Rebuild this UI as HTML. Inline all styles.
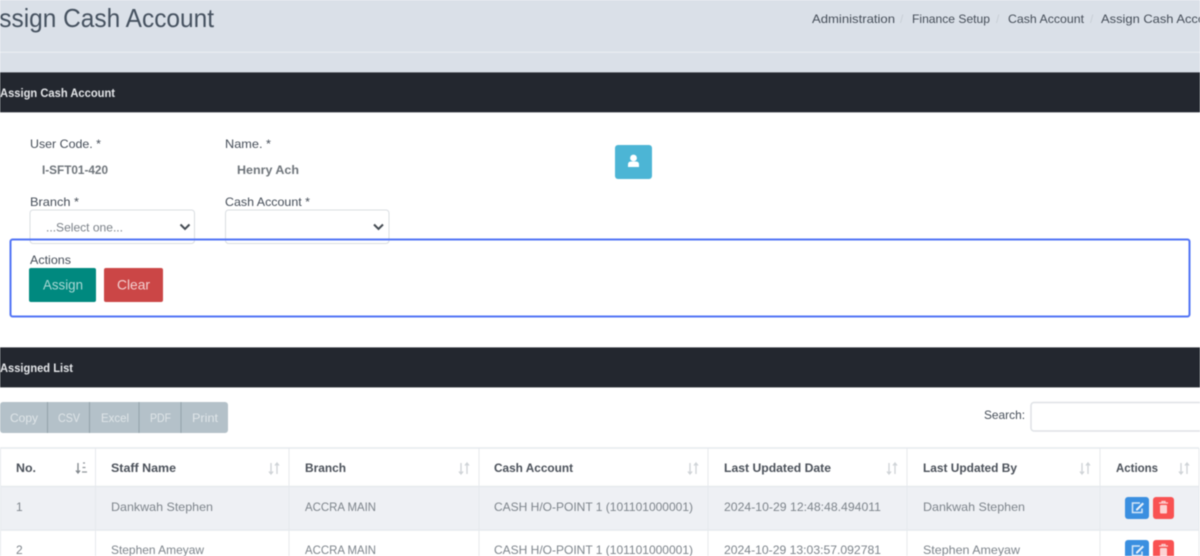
<!DOCTYPE html>
<html lang="en">
<head>
<meta charset="utf-8">
<title>Assign Cash Account</title>
<style>
html,body{margin:0;padding:0;width:1200px;height:556px;overflow:hidden;background:#fff}
svg{display:block;filter:blur(.55px)}
text{font-family:"Liberation Sans",sans-serif;font-size:12px;fill:#6e757c}
.l{fill:#454d58}
.h{font-weight:bold;fill:#4a5059}
.w{font-weight:bold;fill:#e4e6e9}
.c{fill:#7d848b}
.b{fill:#dfe5e8}
</style>
</head>
<body>
<svg width="1200" height="556" viewBox="0 0 1200 556" xmlns="http://www.w3.org/2000/svg">
<rect width="1200" height="113" fill="#dae0e8"/>
<rect y="51.5" width="1200" height="1.5" fill="#e7ebf0"/>
<rect y="72.400" width="1200" height="40" fill="#23272f"/>
<rect y="347.400" width="1200" height="40" fill="#23272f"/>
<rect y="112.400" width="1200" height="1" fill="#fff"/>

<text x="-17" y="27" style="font-size:26px;fill:#465260" textLength="231" lengthAdjust="spacingAndGlyphs">Assign Cash Account</text>

<text x="812" y="23" class="l" textLength="83" lengthAdjust="spacingAndGlyphs">Administration</text>
<text x="900" y="23" style="fill:#c8ced5">/</text>
<text x="912" y="23" class="l" textLength="78" lengthAdjust="spacingAndGlyphs">Finance Setup</text>
<text x="996" y="23" style="fill:#c8ced5">/</text>
<text x="1008" y="23" class="l" textLength="76" lengthAdjust="spacingAndGlyphs">Cash Account</text>
<text x="1090" y="23" style="fill:#c8ced5">/</text>
<text x="1101" y="23" class="l" textLength="122" lengthAdjust="spacingAndGlyphs">Assign Cash Account</text>

<text x="0" y="97" class="w" textLength="115" lengthAdjust="spacingAndGlyphs">Assign Cash Account</text>
<text x="0" y="372" class="w" textLength="73" lengthAdjust="spacingAndGlyphs">Assigned List</text>

<text x="30" y="148" class="l" textLength="71" lengthAdjust="spacingAndGlyphs">User Code. *</text>
<text x="225" y="148" class="l" textLength="46" lengthAdjust="spacingAndGlyphs">Name. *</text>
<text x="42" y="174" class="h" style="fill:#6e747a" textLength="66" lengthAdjust="spacingAndGlyphs">I-SFT01-420</text>
<text x="237" y="174" class="h" style="fill:#6e747a" textLength="62" lengthAdjust="spacingAndGlyphs">Henry Ach</text>
<text x="30" y="206" class="l" textLength="49" lengthAdjust="spacingAndGlyphs">Branch *</text>
<text x="225" y="206" class="l" textLength="85" lengthAdjust="spacingAndGlyphs">Cash Account *</text>

<rect x="30" y="210" width="164.500" height="33.500" rx="3" fill="#fff" stroke="#d9dde1"/>
<rect x="225.500" y="210" width="163.500" height="33.500" rx="3" fill="#fff" stroke="#d9dde1"/>
<text x="46" y="231.500" style="fill:#7b8188" textLength="77" lengthAdjust="spacingAndGlyphs">...Select one...</text>
<path d="M180.500 224.500l4.500 4.500 4.500-4.500M374 224.500l4.500 4.500 4.500-4.500" fill="none" stroke="#444b52" stroke-width="2"/>

<rect x="615" y="145" width="37" height="34" rx="3" fill="#4cb5d5"/>
<circle cx="633.500" cy="158" r="3.400" fill="#fff"/>
<path d="M628 167v-2.500q0-3 3-3h5q3 0 3 3v2.500z" fill="#fff"/>

<rect x="10.500" y="239.500" width="1179" height="77" rx="2" fill="none" stroke="#5274f5" stroke-width="2"/>
<text x="30" y="264" class="l" textLength="41" lengthAdjust="spacingAndGlyphs">Actions</text>
<rect x="29" y="268" width="67" height="34" rx="2" fill="#00897f"/>
<text x="43" y="289.500" style="font-size:14px;fill:#a9d8d4" textLength="40" lengthAdjust="spacingAndGlyphs">Assign</text>
<rect x="104" y="268" width="59" height="34" rx="2" fill="#cb4646"/>
<text x="117" y="289.500" style="font-size:14px;fill:#f3d0d0" textLength="33" lengthAdjust="spacingAndGlyphs">Clear</text>

<rect x="0" y="402" width="228" height="31" rx="3" fill="#b4c1c9"/>
<path d="M47.500 402v31M89.500 402v31M139 402v31M181 402v31" stroke="#93a2ab" stroke-width="1"/>
<text x="10" y="422" class="b" textLength="28" lengthAdjust="spacingAndGlyphs">Copy</text>
<text x="58" y="422" class="b" textLength="22" lengthAdjust="spacingAndGlyphs">CSV</text>
<text x="101" y="422" class="b" textLength="28" lengthAdjust="spacingAndGlyphs">Excel</text>
<text x="150" y="422" class="b" textLength="21" lengthAdjust="spacingAndGlyphs">PDF</text>
<text x="192" y="422" class="b" textLength="26" lengthAdjust="spacingAndGlyphs">Print</text>

<text x="984" y="419" class="l" textLength="41" lengthAdjust="spacingAndGlyphs">Search:</text>
<rect x="1031" y="402.500" width="172" height="28.500" rx="3" fill="#fff" stroke="#dfe2e6" stroke-width="1.500"/>

<rect x="0" y="487" width="1199" height="43" fill="#eef0f4"/>
<path d="M0 448h1199M0 486.500h1199M0 530h1199" stroke="#e6e9ed" stroke-width="1.500" fill="none"/>
<path d="M0.500 448v108M95.500 448v108M289 448v108M479 448v108M708 448v108M907 448v108M1100 448v108M1199 448v108" stroke="#e6e9ed" fill="none"/>

<text x="16" y="472" class="h" textLength="20" lengthAdjust="spacingAndGlyphs">No.</text>
<text x="111" y="472" class="h" textLength="65" lengthAdjust="spacingAndGlyphs">Staff Name</text>
<text x="305" y="472" class="h" textLength="41" lengthAdjust="spacingAndGlyphs">Branch</text>
<text x="494" y="472" class="h" textLength="79" lengthAdjust="spacingAndGlyphs">Cash Account</text>
<text x="724" y="472" class="h" textLength="107" lengthAdjust="spacingAndGlyphs">Last Updated Date</text>
<text x="923" y="472" class="h" textLength="94" lengthAdjust="spacingAndGlyphs">Last Updated By</text>
<text x="1116" y="472" class="h" textLength="42" lengthAdjust="spacingAndGlyphs">Actions</text>

<g fill="none" stroke-width="1.300">
<path d="M78 463v10M76 470.500l2 2.500 2-2.500" stroke="#7f858b"/>
<path d="M83 463h2M82.500 467.500h3M82 472h5" stroke="#8f959a"/>
<g stroke="#ced2d6">
<path d="M271 463v11M269 471.500l2 2.500 2-2.500M277 474v-11M275 465.500l2-2.500 2 2.500"/>
<path d="M461 463v11M459 471.500l2 2.500 2-2.500M467 474v-11M465 465.500l2-2.500 2 2.500"/>
<path d="M690 463v11M688 471.500l2 2.500 2-2.500M696 474v-11M694 465.500l2-2.500 2 2.500"/>
<path d="M889 463v11M887 471.500l2 2.500 2-2.500M895 474v-11M893 465.500l2-2.500 2 2.500"/>
<path d="M1082 463v11M1080 471.500l2 2.500 2-2.500M1088 474v-11M1086 465.500l2-2.500 2 2.500"/>
<path d="M1181 463v11M1179 471.500l2 2.500 2-2.500M1187 474v-11M1185 465.500l2-2.500 2 2.500"/>
</g>
</g>

<text x="16" y="511" class="c">1</text>
<text x="111" y="511" class="c" textLength="102" lengthAdjust="spacingAndGlyphs">Dankwah Stephen</text>
<text x="305" y="511" class="c" textLength="71" lengthAdjust="spacingAndGlyphs">ACCRA MAIN</text>
<text x="494" y="511" class="c" textLength="199" lengthAdjust="spacingAndGlyphs">CASH H/O-POINT 1 (101101000001)</text>
<text x="724" y="511" class="c" textLength="157" lengthAdjust="spacingAndGlyphs">2024-10-29 12:48:48.494011</text>
<text x="923" y="511" class="c" textLength="102" lengthAdjust="spacingAndGlyphs">Dankwah Stephen</text>

<text x="16" y="554" class="c">2</text>
<text x="111" y="554" class="c" textLength="93" lengthAdjust="spacingAndGlyphs">Stephen Ameyaw</text>
<text x="305" y="554" class="c" textLength="71" lengthAdjust="spacingAndGlyphs">ACCRA MAIN</text>
<text x="494" y="554" class="c" textLength="199" lengthAdjust="spacingAndGlyphs">CASH H/O-POINT 1 (101101000001)</text>
<text x="724" y="554" class="c" textLength="157" lengthAdjust="spacingAndGlyphs">2024-10-29 13:03:57.092781</text>
<text x="923" y="554" class="c" textLength="97" lengthAdjust="spacingAndGlyphs">Stephen Ameyaw</text>

<g>
<rect x="1125" y="497" width="24" height="22" rx="3" fill="#3a8fe0"/>
<rect x="1153" y="497" width="21" height="22" rx="3" fill="#f95252"/>
<path d="M1140 503h-7.500v9.500h9.500v-4" fill="none" stroke="#d5e7f8" stroke-width="1.500"/>
<path d="M1136 509l6.500-6.500 1.500 1.500-6.500 6.500h-1.500z" fill="#e6f0fa"/>
<path d="M1159 503h9M1162 503v-1.500h3v1.500" fill="none" stroke="#fcd3d3" stroke-width="1.300"/>
<rect x="1160" y="505" width="7" height="8.500" rx="1" fill="#fcd3d3"/>
</g>
<g>
<rect x="1125" y="540" width="24" height="22" rx="3" fill="#3a8fe0"/>
<rect x="1153" y="540" width="21" height="22" rx="3" fill="#f95252"/>
<path d="M1140 546h-7.500v9.500h9.500v-4" fill="none" stroke="#d5e7f8" stroke-width="1.500"/>
<path d="M1136 552l6.500-6.500 1.500 1.500-6.500 6.500h-1.500z" fill="#e6f0fa"/>
<path d="M1159 546h9M1162 546v-1.500h3v1.500" fill="none" stroke="#fcd3d3" stroke-width="1.300"/>
<rect x="1160" y="548" width="7" height="8.500" rx="1" fill="#fcd3d3"/>
</g>
</svg>
</body>
</html>
